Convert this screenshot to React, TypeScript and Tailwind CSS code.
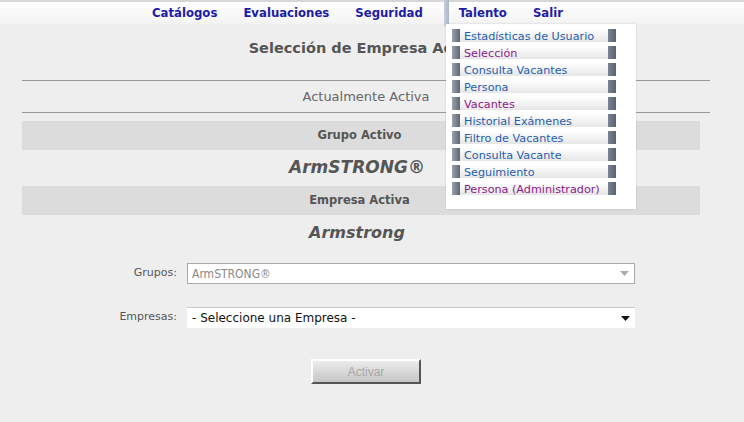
import React from "react";

const items: { t: string; v?: boolean }[] = [
  { t: "Estadísticas de Usuario" },
  { t: "Selección", v: true },
  { t: "Consulta Vacantes" },
  { t: "Persona" },
  { t: "Vacantes", v: true },
  { t: "Historial Exámenes" },
  { t: "Filtro de Vacantes" },
  { t: "Consulta Vacante" },
  { t: "Seguimiento" },
  { t: "Persona (Administrador)", v: true },
];

export default function App() {
  const verdana = { fontFamily: '"DejaVu Sans", Verdana, sans-serif' };
  return (
    <div className="relative w-[744px] h-[422px] overflow-hidden bg-[#eeeeee]" style={verdana}>
      {/* top bar */}
      <div className="h-[24px] border-t-2 border-[#d6d6d6] bg-gradient-to-b from-white to-[#f3f3f3] flex items-start pl-[152px]">
        <nav
          className="flex items-center h-[21px] text-[13px] font-bold text-[#1c1ca8]"
          style={{ fontFamily: '"DejaVu Sans Condensed", "DejaVu Sans", sans-serif' }}
        >
          <span>Catálogos</span>
          <span className="ml-[26px]">Evaluaciones</span>
          <span className="ml-[26px]">Seguridad</span>
          <span className="ml-[21px] mr-[10px] self-start -mt-[2px] h-[26px] w-[5px] bg-gradient-to-r from-[#c8d0dc] to-[#a9b6c8]" />
          <span>Talento</span>
          <span className="ml-[26px]">Salir</span>
        </nav>
      </div>

      {/* main */}
      <div className="w-[688px] ml-[22px] text-[#555]">
        <h1 className="mt-[15px] h-[18px] leading-[18px] text-center text-[14.5px] font-bold text-[#555]">
          Selección de Empresa Activa
        </h1>
        <div className="mt-[23px] border-t border-[#9a9a9a]" />
        <div className="h-[31px] leading-[31px] text-center text-[13px] text-[#666]">Actualmente Activa</div>
        <div className="border-t border-[#9a9a9a]" />
        <div className="mt-[8px] w-[678px] h-[29px] bg-[#dcdcdc] flex items-center justify-center text-[11.5px] font-bold text-[#555]">
          <span className="-ml-[3px]">Grupo Activo</span>
        </div>
        <div className="w-[678px] h-[36px] flex items-center justify-center text-[17px] font-bold italic text-[#555]">
          <span className="-ml-[8px]">ArmSTRONG®</span>
        </div>
        <div className="w-[678px] h-[29px] bg-[#dcdcdc] flex items-center justify-center text-[11.5px] font-bold text-[#555]">
          <span className="-ml-[3px]">Empresa Activa</span>
        </div>
        <div className="w-[678px] h-[36px] flex items-center justify-center text-[16px] font-bold italic text-[#555]">
          <span className="-ml-[8px]">Armstrong</span>
        </div>

        <div className="mt-[12px] flex items-center">
          <div className="w-[155px] text-right text-[11px] text-[#555]">Grupos:</div>
          <div className="ml-[10px] w-[448px] h-[21px] bg-white border border-[#a9a9a9] flex items-center justify-between pl-[4px] pr-[5px]">
            <span className="text-[12px] text-[#888]" style={{ fontFamily: '"DejaVu Sans Condensed", "DejaVu Sans", sans-serif' }}>ArmSTRONG®</span>
            <svg width="9" height="5" viewBox="0 0 9 5"><path d="M0 0h9L4.5 5z" fill="#aaa" /></svg>
          </div>
        </div>

        <div className="mt-[23px] flex items-center">
          <div className="w-[155px] text-right text-[11px] text-[#555]">Empresas:</div>
          <div className="ml-[10px] w-[448px] h-[21px] bg-white border-t border-[#c8c8c8] flex items-center justify-between pl-[5px] pr-[5px]">
            <span className="text-[12px] text-[#111]">- Seleccione una Empresa -</span>
            <svg width="9" height="5" viewBox="0 0 9 5"><path d="M0 0h9L4.5 5z" fill="#111" /></svg>
          </div>
        </div>

        <div className="mt-[31px] flex justify-center">
          <button
            className="w-[110px] h-[25px] border-2 border-t-white border-l-white border-r-[#555] border-b-[#555] bg-gradient-to-b from-[#ececec] to-[#c6c6c6] text-[12px] text-[#a8a8a8]"
            style={{ fontFamily: '"Liberation Sans", Arial, sans-serif' }}
          >
            Activar
          </button>
        </div>
      </div>

      {/* dropdown menu */}
      <div className="absolute left-[446px] top-[24px] w-[190px] h-[185px] bg-white shadow-[0_0_2px_rgba(0,0,0,0.15)] pt-[5px] pl-[6px]">
        {items.map((it) => (
          <div key={it.t} className="flex h-[13px] mb-[4px]">
            <div className="w-[8px] h-full bg-gradient-to-r from-[#9aa2ae] to-[#5f6774]" />
            <div className="w-[148px] h-full bg-gradient-to-b from-white to-[#e6e6e6] flex items-center pl-[4px]">
              <span className={"text-[11.2px] leading-[13px] pt-[2px] whitespace-nowrap " + (it.v ? "text-[#8a1a8a]" : "text-[#1f5fae]")}>
                {it.t}
              </span>
            </div>
            <div className="w-[8px] h-full bg-gradient-to-r from-[#7a8494] to-[#5a6270]" />
          </div>
        ))}
      </div>
    </div>
  );
}
